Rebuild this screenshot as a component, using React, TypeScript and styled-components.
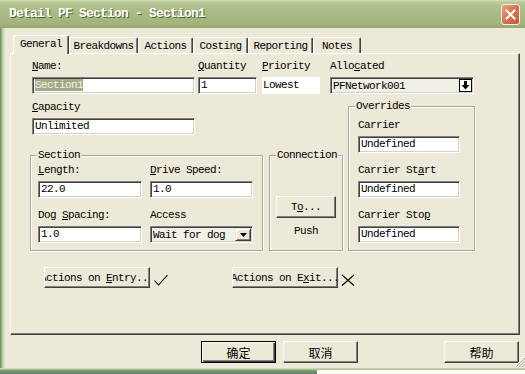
import React from 'react';
import styled, { createGlobalStyle } from 'styled-components';

const FONT = `"Liberation Mono", "DejaVu Sans Mono", "Noto Sans CJK SC", monospace`;
const CJK = `"Noto Sans CJK SC", "Liberation Sans", sans-serif`;

const Global = createGlobalStyle`
  html, body { margin: 0; padding: 0; background: #ffffff; }
  body { font-family: ${FONT}; }
`;

const Screen = styled.div`
  width: 525px;
  height: 374px;
  overflow: hidden;
  display: flex;
  flex-direction: column;
  font-family: ${FONT};
  font-size: 11px;
  letter-spacing: -0.6px;
  color: #000;
  background: #ece9d8;
`;

const TitleBar = styled.div`
  height: 28px;
  flex: none;
  display: flex;
  align-items: center;
  justify-content: space-between;
  padding: 0 5px 0 9px;
  background: linear-gradient(
    to bottom,
    #d4ddb8 0px,
    #bccb9c 2px,
    #b0c08c 5px,
    #a9ba84 14px,
    #a2b47c 24px,
    #94a86e 28px
  );
`;

const TitleText = styled.span`
  font-family: ${FONT};
  font-weight: bold;
  font-size: 13px;
  line-height: 16px;
  letter-spacing: -0.8px;
  color: #ffffff;
  text-shadow: 1px 1px 0 #55642f;
  white-space: pre;
`;

const CloseBtn = styled.div`
  width: 19px;
  height: 21px;
  box-sizing: border-box;
  border: 1px solid #f4f0e8;
  border-radius: 3px;
  background: linear-gradient(135deg, #eca184 0%, #db7552 45%, #c85a36 100%);
  display: flex;
  align-items: center;
  justify-content: center;
`;

const Middle = styled.div`
  flex: 1;
  display: flex;
  min-height: 0;
`;

const LeftFrame = styled.div`
  width: 5px;
  flex: none;
  background: linear-gradient(to right, #5f8466 0px, #86a67a 1px, #a4bc8c 2px, #c2d2a6 3px, #dde3c8 4px);
`;

const Content = styled.div`
  flex: 1;
  position: relative;
  display: flex;
  flex-direction: column;
  padding: 7px 5px 0 5px;
  background: #ece9d8;
`;

const TabStrip = styled.div`
  display: flex;
  align-items: flex-end;
  height: 18px;
  margin-left: 3px;
  position: relative;
  z-index: 2;
`;

const Tab = styled.div<{ $w: number; $active?: boolean }>`
  width: ${p => p.$w}px;
  height: ${p => (p.$active ? 19 : 16)}px;
  margin-bottom: ${p => (p.$active ? -1 : 0)}px;
  box-sizing: border-box;
  flex: none;
  display: flex;
  align-items: center;
  justify-content: center;
  padding-bottom: ${p => (p.$active ? 2 : 0)}px;
  background: #ece9d8;
  border-top: 1px solid #ffffff;
  border-left: 1px solid #ffffff;
  border-right: 1px solid #404040;
  box-shadow: inset -1px 0 0 #808080;
  border-radius: 2px 2px 0 0;
  white-space: nowrap;
`;

const Panel = styled.div`
  width: 510px;
  height: 282px;
  box-sizing: border-box;
  border: 1px solid;
  border-color: #ffffff #404040 #404040 #ffffff;
  box-shadow: inset -1px -1px 0 #808080;
  position: relative;
  z-index: 1;
`;

const PanelBody = styled.div`
  padding: 6px 0 0 19px;
  display: flex;
  flex-direction: column;
`;

const Row = styled.div<{ $mt?: number; $pl?: number }>`
  display: flex;
  align-items: flex-start;
  margin-top: ${p => p.$mt ?? 0}px;
  padding-left: ${p => p.$pl ?? 0}px;
`;

const Col = styled.div<{ $w?: number; $ml?: number; $mt?: number }>`
  display: flex;
  flex-direction: column;
  flex: none;
  ${p => (p.$w ? `width: ${p.$w}px;` : '')}
  margin-left: ${p => p.$ml ?? 0}px;
  margin-top: ${p => p.$mt ?? 0}px;
`;

const Field = styled.div<{ $w: number; $ml?: number }>`
  width: ${p => p.$w}px;
  margin-left: ${p => p.$ml ?? 0}px;
  flex: none;
  display: flex;
  flex-direction: column;
  gap: 4px;
`;

const Label = styled.div`
  height: 13px;
  line-height: 13px;
  white-space: nowrap;
`;

const U = styled.span`
  text-decoration: underline;
  text-underline-offset: 1px;
`;

const Edit = styled.div`
  height: 17px;
  box-sizing: border-box;
  background: #ffffff;
  border: 1px solid;
  border-color: #808080 #ffffff #ffffff #808080;
  box-shadow: inset 1px 1px 0 #404040, inset -1px -1px 0 #d4d0c8;
  padding-left: 2px;
  line-height: 15px;
  white-space: nowrap;
  overflow: hidden;
`;

const FlatBox = styled.div`
  height: 17px;
  box-sizing: border-box;
  background: #ffffff;
  padding-left: 1px;
  line-height: 17px;
  white-space: nowrap;
`;

const Selected = styled.span`
  background: #a3ab86;
  color: #f4f2e6;
`;

const Combo = styled.div`
  height: 17px;
  box-sizing: border-box;
  border: 1px solid;
  border-color: #808080 #ffffff #ffffff #808080;
  box-shadow: inset 1px 1px 0 #404040, inset -1px -1px 0 #d4d0c8;
  background: #f1efe6;
  display: flex;
  align-items: center;
  justify-content: space-between;
  padding: 0 1px 0 2px;
  white-space: nowrap;
`;

const ComboArrow = styled.div`
  width: 13px;
  height: 13px;
  box-sizing: border-box;
  border: 1px solid #000;
  background: #ffffff;
  display: flex;
  align-items: center;
  justify-content: center;
`;

const SelectArrow = styled.div`
  width: 16px;
  height: 13px;
  box-sizing: border-box;
  background: #ece9d8;
  border: 1px solid;
  border-color: #ece9d8 #404040 #404040 #ece9d8;
  box-shadow: inset 1px 1px 0 #ffffff, inset -1px -1px 0 #808080;
  display: flex;
  align-items: center;
  justify-content: center;
`;

const Group = styled.div<{ $w: number; $h: number; $mt?: number; $ml?: number; $pl?: number; $center?: boolean }>`
  width: ${p => p.$w}px;
  height: ${p => p.$h}px;
  margin-top: ${p => p.$mt ?? 0}px;
  margin-left: ${p => p.$ml ?? 0}px;
  padding-left: ${p => p.$pl ?? 0}px;
  box-sizing: border-box;
  flex: none;
  border: 1px solid #aca899;
  box-shadow: inset 1px 1px 0 #ffffff, 1px 1px 0 #ffffff;
  display: flex;
  flex-direction: column;
  align-items: ${p => (p.$center ? 'center' : 'flex-start')};
`;

const GroupTitle = styled.div<{ $ml: number }>`
  height: 13px;
  line-height: 13px;
  margin: -7px 0 0 ${p => p.$ml}px;
  padding: 0 1px;
  background: #ece9d8;
  align-self: flex-start;
  white-space: nowrap;
`;

const Grid2 = styled.div<{ $mt: number }>`
  display: grid;
  grid-template-columns: 104px 103px;
  column-gap: 8px;
  row-gap: 11px;
  margin-top: ${p => p.$mt}px;
`;

const Stack = styled.div<{ $mt: number }>`
  display: flex;
  flex-direction: column;
  gap: 11px;
  margin-top: ${p => p.$mt}px;
`;

const Button = styled.div<{ $w: number; $h: number; $ml?: number; $mt?: number; $cjk?: boolean; $default?: boolean }>`
  width: ${p => p.$w}px;
  height: ${p => p.$h}px;
  margin-left: ${p => p.$ml ?? 0}px;
  margin-top: ${p => p.$mt ?? 0}px;
  flex: none;
  box-sizing: border-box;
  display: flex;
  align-items: center;
  justify-content: center;
  overflow: hidden;
  white-space: nowrap;
  background: #ece9d8;
  border: 1px solid;
  border-color: ${p => (p.$default ? '#000000' : '#ffffff #404040 #404040 #ffffff')};
  box-shadow: ${p =>
    p.$default
      ? 'inset 1px 1px 0 #ffffff, inset -1px -1px 0 #404040, inset -2px -2px 0 #808080'
      : 'inset -1px -1px 0 #808080'};
  ${p => (p.$cjk ? `font-family: ${CJK}; font-size: 12px; letter-spacing: 0;` : '')}
`;

const Caption = styled.span`
  flex: none;
  white-space: pre;
`;

const PushText = styled.div`
  margin-top: 7px;
  height: 13px;
  line-height: 13px;
`;

const ButtonRow = styled.div`
  display: flex;
  margin-top: 6px;
  padding-left: 191px;
`;

const Mark = styled.svg<{ $ml: number }>`
  flex: none;
  margin-left: ${p => p.$ml}px;
  margin-top: 7px;
`;

const Grip = styled.svg`
  position: absolute;
  right: 0;
  bottom: 1px;
`;

const BottomFrame = styled.div`
  height: 6px;
  flex: none;
  display: flex;
  flex-direction: column;
`;

const BottomEdge = styled.div`
  height: 2px;
  background: linear-gradient(to bottom, #d8e2c0, #9bb47c);
`;

const BottomStrip = styled.div`
  flex: 1;
  display: flex;
`;

const StripPart = styled.div<{ $w?: number; $bg: string }>`
  ${p => (p.$w ? `width: ${p.$w}px; flex: none;` : 'flex: 1;')}
  background: ${p => p.$bg};
`;

const tabs = [
  { t: 'General', w: 56, active: true },
  { t: 'Breakdowns', w: 69 },
  { t: 'Actions', w: 55 },
  { t: 'Costing', w: 55 },
  { t: 'Reporting', w: 65 },
  { t: 'Notes', w: 48 },
];

export default function App() {
  return (
    <>
      <Global />
      <Screen>
        <TitleBar>
          <TitleText>Detail PF Section - Section1</TitleText>
          <CloseBtn>
            <svg width="11" height="11" viewBox="0 0 11 11">
              <path d="M1.5 1.5 L9.5 9.5 M9.5 1.5 L1.5 9.5" stroke="#fff" strokeWidth="2" strokeLinecap="square" />
            </svg>
          </CloseBtn>
        </TitleBar>
        <Middle>
          <LeftFrame />
          <Content>
            <TabStrip>
              {tabs.map(tb => (
                <Tab key={tb.t} $w={tb.w} $active={tb.active}>
                  {tb.t}
                </Tab>
              ))}
            </TabStrip>
            <Panel>
              <PanelBody>
                <Row $pl={2}>
                  <Field $w={163}>
                    <Label>
                      <U>N</U>ame:
                    </Label>
                    <Edit>
                      <Selected>Section1</Selected>
                    </Edit>
                  </Field>
                  <Field $w={59} $ml={3}>
                    <Label>
                      <U>Q</U>uantity
                    </Label>
                    <Edit>1</Edit>
                  </Field>
                  <Field $w={58} $ml={5}>
                    <Label>
                      <U>P</U>riority
                    </Label>
                    <FlatBox>Lowest</FlatBox>
                  </Field>
                  <Field $w={144} $ml={10}>
                    <Label>
                      Allo<U>c</U>ated
                    </Label>
                    <Combo>
                      <span>PFNetwork001</span>
                      <ComboArrow>
                        <svg width="9" height="9" viewBox="0 0 9 9">
                          <path d="M3 0 H6 V4 H8.5 L4.5 8.5 L0.5 4 H3 Z" fill="#000" />
                        </svg>
                      </ComboArrow>
                    </Combo>
                  </Field>
                </Row>
                <Row $mt={7}>
                  <Col $w={313}>
                    <Field $w={163} $ml={2}>
                      <Label>
                        <U>C</U>apacity
                      </Label>
                      <Edit>Unlimited</Edit>
                    </Field>
                    <Row $mt={20}>
                      <Group $w={233} $h={96} $pl={7}>
                        <GroupTitle $ml={-1}>Section</GroupTitle>
                        <Grid2 $mt={2}>
                          <Field $w={104}>
                            <Label>
                              <U>L</U>ength:
                            </Label>
                            <Edit>22.0</Edit>
                          </Field>
                          <Field $w={103}>
                            <Label>
                              <U>D</U>rive Speed:
                            </Label>
                            <Edit>1.0</Edit>
                          </Field>
                          <Field $w={104}>
                            <Label>
                              Dog <U>S</U>pacing:
                            </Label>
                            <Edit>1.0</Edit>
                          </Field>
                          <Field $w={103}>
                            <Label>Access</Label>
                            <Combo>
                              <span>Wait for dog</span>
                              <SelectArrow>
                                <svg width="7" height="4" viewBox="0 0 7 4">
                                  <path d="M0 0 H7 L3.5 4 Z" fill="#000" />
                                </svg>
                              </SelectArrow>
                            </Combo>
                          </Field>
                        </Grid2>
                      </Group>
                      <Group $w={74} $h={96} $ml={6} $center>
                        <GroupTitle $ml={6}>Connection</GroupTitle>
                        <Button $w={60} $h={22} $mt={34}>
                          <Caption>
                            T<U>o</U>...
                          </Caption>
                        </Button>
                        <PushText>Push</PushText>
                      </Group>
                    </Row>
                  </Col>
                  <Col $ml={5}>
                    <Group $w={127} $h={145} $mt={5} $pl={9}>
                      <GroupTitle $ml={-3}>Overrides</GroupTitle>
                      <Stack $mt={6}>
                        <Field $w={102}>
                          <Label>Carrier</Label>
                          <Edit>Undefined</Edit>
                        </Field>
                        <Field $w={102}>
                          <Label>
                            Carrier St<U>a</U>rt
                          </Label>
                          <Edit>Undefined</Edit>
                        </Field>
                        <Field $w={102}>
                          <Label>
                            Carrier Sto<U>p</U>
                          </Label>
                          <Edit>Undefined</Edit>
                        </Field>
                      </Stack>
                    </Group>
                  </Col>
                </Row>
                <Row $mt={16} $pl={14}>
                  <Button $w={106} $h={21}>
                    <Caption>
                      Actions on <U>E</U>ntry...
                    </Caption>
                  </Button>
                  <Mark $ml={4} width="14" height="12" viewBox="0 0 14 12">
                    <path d="M0.5 6.5 L4.5 11 L13.5 1" stroke="#000" strokeWidth="1.1" fill="none" />
                  </Mark>
                  <Button $w={106} $h={21} $ml={64}>
                    <Caption>
                      Actions on E<U>x</U>it...
                    </Caption>
                  </Button>
                  <Mark $ml={3} width="14" height="12" viewBox="0 0 14 12">
                    <path d="M1 1 L13 11.5 M13 1 L1 11.5" stroke="#000" strokeWidth="1.1" fill="none" />
                  </Mark>
                </Row>
              </PanelBody>
            </Panel>
            <ButtonRow>
              <Button $w={75} $h={22} $cjk $default>
                确定
              </Button>
              <Button $w={75} $h={22} $cjk $ml={7}>
                取消
              </Button>
              <Button $w={75} $h={22} $cjk $ml={86}>
                帮助
              </Button>
            </ButtonRow>
            <Grip width="11" height="11" viewBox="0 0 11 11">
              <path d="M10 1 L1 10 M10 4 L4 10 M10 7 L7 10" stroke="#fff" strokeWidth="1" />
              <path d="M11 2 L2 11 M11 5 L5 11 M11 8 L8 11" stroke="#aca899" strokeWidth="1" />
            </Grip>
          </Content>
        </Middle>
        <BottomFrame>
          <BottomEdge />
          <BottomStrip>
            <StripPart $w={317} $bg="linear-gradient(to bottom, #7f9e70, #5f8070)" />
            <StripPart $bg="#ffffff" />
          </BottomStrip>
        </BottomFrame>
      </Screen>
    </>
  );
}
